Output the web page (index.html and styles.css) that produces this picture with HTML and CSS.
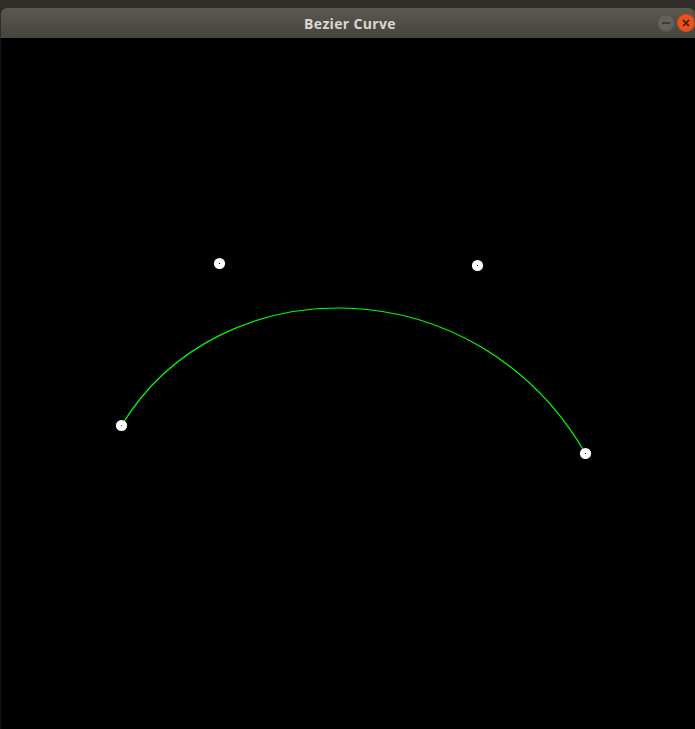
FILE: index.html
```html
<!DOCTYPE html>
<html>
<head>
<meta charset="utf-8">
<title>Bezier Curve</title>
<link rel="stylesheet" href="styles.css">
</head>
<body>
<div class="desktop-strip"></div>
<div class="window">
  <div class="titlebar">
    <span class="title">Bezier Curve</span>
    <div class="controls">
      <span class="btn btn-min"><svg width="18" height="18" viewBox="0 0 18 18"><line x1="5" y1="9" x2="13" y2="9" stroke="#34332f" stroke-width="1.6"/></svg></span>
      <span class="btn btn-close"><svg width="18" height="18" viewBox="0 0 18 18"><path d="M6 6 L12 12 M12 6 L6 12" stroke="#3b1a0d" stroke-width="1.7"/></svg></span>
    </div>
  </div>
  <div class="canvas">
    <svg class="scene" width="694" height="691" viewBox="1 38 694 691">
      <path d="M121.5 425.5 C219.5 263.5 477.5 265.5 585.5 453.5" fill="none" stroke="#00ff00" stroke-width="1.2"/>
      <g fill="#ffffff">
        <circle cx="219.5" cy="263.5" r="5.6"/>
        <circle cx="477.5" cy="265.5" r="5.6"/>
        <circle cx="121.5" cy="425.5" r="5.6"/>
        <circle cx="585.5" cy="453.5" r="5.6"/>
      </g>
      <g fill="#000000">
        <rect x="219" y="263" width="1" height="1"/>
        <rect x="477" y="265" width="1" height="1"/>
        <rect x="585" y="453" width="1" height="1"/>
      </g>
      <rect x="121" y="425" width="1" height="1" fill="#00cc00"/>
    </svg>
  </div>
</div>
</body>
</html>
```
FILE: styles.css
```css
html, body {
  margin: 0;
  padding: 0;
  background: #2e2c28;
  overflow: hidden;
}
.desktop-strip {
  height: 8px;
  background: #302e2a;
}
.window {
  display: flex;
  flex-direction: column;
  margin-left: 1px;
  height: 721px;
}
.titlebar {
  height: 30px;
  flex: none;
  position: relative;
  display: flex;
  align-items: center;
  justify-content: center;
  background: linear-gradient(#5a5850, #46443f);
  border-radius: 6px 6px 0 0;
}
.title {
  font-family: "Open Sans", "DejaVu Sans", sans-serif;
  font-weight: 700;
  font-size: 14px;
  color: #dcd8cf;
  letter-spacing: 0.35px;
  margin-left: 4px;
}
.controls {
  position: absolute;
  right: 0;
  top: 6px;
  display: flex;
  gap: 2px;
}
.btn {
  width: 18px;
  height: 18px;
  border-radius: 50%;
  display: flex;
}
.btn-min {
  background: #62615c;
  box-shadow: inset 0 0 0 1px #4f4d48;
}
.btn-close {
  background: #e8531f;
  box-shadow: inset 0 0 0 1px #c9461a;
}
.canvas {
  flex: 1;
  background: #000000;
  box-shadow: -1px 0 0 #1e0a22;
}
.scene {
  display: block;
}
```
